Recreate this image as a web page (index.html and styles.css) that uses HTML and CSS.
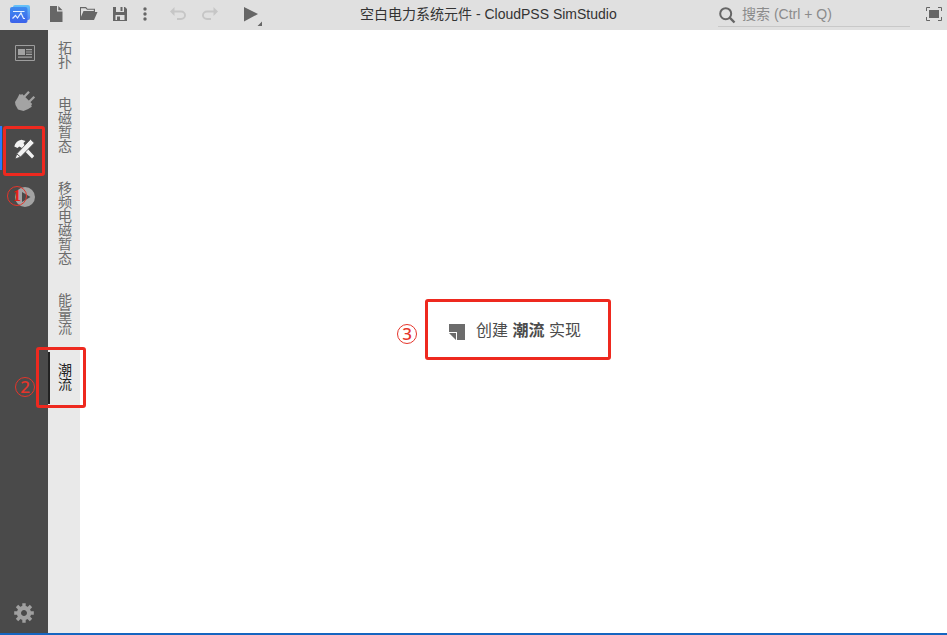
FILE: index.html
```html
<!DOCTYPE html>
<html lang="zh-CN">
<head>
<meta charset="utf-8">
<title>空白电力系统元件 - CloudPSS SimStudio</title>
<link rel="stylesheet" href="styles.css">
</head>
<body>
<div class="app">
  <header class="toolbar">
    <div class="tools">
      <svg class="logo" width="20" height="18" viewBox="0 0 20 18"><defs><linearGradient id="g" x1="0" y1="0" x2="0" y2="1"><stop offset="0" stop-color="#3f8cf0"/><stop offset="1" stop-color="#3c62ea"/></linearGradient><linearGradient id="h" x1="0" y1="0" x2="0" y2="1"><stop offset="0" stop-color="#65c3f8"/><stop offset="1" stop-color="#5484f4"/></linearGradient></defs><rect x="3" y="0" width="17" height="15" rx="2" fill="url(#h)"/><rect x="0" y="2" width="17.500" height="16" rx="2" fill="url(#g)"/><path d="M3 6.500h11.500M2.500 13.500l3-3 2 2.500 3.500-5 2.500 5.500h1.500" fill="none" stroke="#e4efff" stroke-width="1.200"/></svg>
      <svg class="new" width="13" height="16" viewBox="0 0 13 16"><path d="M0 0h7v5.500h5.500V16H0zM8.300 0l4.200 4.300H8.300z"/></svg>
      <svg class="open" width="18" height="14" viewBox="0 0 18 14"><path fill-rule="evenodd" d="M0 0h6l1.500 1.700H15V5h2.500L14 13H0zM1 1.200v8.500L3.500 4h10.300V2.800H7L5.500 1.200z"/></svg>
      <svg class="save" width="14" height="14" viewBox="0 0 14 14"><path fill-rule="evenodd" d="M0 0h12l2 2v12H0zM3 0v5h8V0zM2.500 8v5h9V8z"/><path d="M7.500 0h2v4h-2zM4 9.500h3V13H4z"/></svg>
      <svg class="more" width="4" height="14" viewBox="0 0 4 14"><circle cx="2" cy="2" r="1.700"/><circle cx="2" cy="7" r="1.700"/><circle cx="2" cy="12" r="1.700"/></svg>
      <svg class="undo" width="16" height="14" viewBox="0 0 16 14"><path d="M0 4.500L4.500 0v3.500H11a5 4.750 0 0 1 0 9.500H7v-2h4a3 2.700 0 0 0 0-5.500H4.500V9z"/></svg>
      <svg class="redo" width="16" height="14" viewBox="0 0 16 14"><path transform="translate(16) scale(-1 1)" d="M0 4.500L4.500 0v3.500H11a5 4.750 0 0 1 0 9.500H7v-2h4a3 2.700 0 0 0 0-5.500H4.500V9z"/></svg>
      <svg class="run" width="19" height="19" viewBox="0 0 19 19"><path d="M0 0l14 7-14 7.500zM18 14.500V19h-4.500z"/></svg>
    </div>
    <h1 class="title">空白电力系统元件 - CloudPSS SimStudio</h1>
    <div class="search">
      <svg width="17" height="17" viewBox="0 0 17 17"><circle cx="6.700" cy="6.700" r="5.500" fill="none" stroke="#666" stroke-width="2"/><path d="M10.700 10.700l4.800 4.800" stroke="#666" stroke-width="2.400"/></svg>
      <span>搜索 (Ctrl + Q)</span>
    </div>
    <svg class="full" width="16" height="14" viewBox="0 0 16 14"><path d="M3 3h10v8H3z"/><path d="M.5 4V.5H4M12 .5h3.500V4M15.500 10v3.500H12M4 13.500H.5V10" fill="none" stroke="#666"/></svg>
  </header>
  <div class="body">
    <nav class="rail">
      <div class="rail-item"><svg width="20" height="16" viewBox="0 0 20 16"><path d="M.5.500h19v15H.5z" fill="none" stroke="#9d9d9d"/><path d="M3 4h7v6H3zM11 4h6v1.200h-6zM11 6.400h6v1.200h-6zM11 8.800h6V10h-6zM3 11.500h14v1.200H3z"/></svg></div>
      <div class="rail-item"><svg width="20" height="20" viewBox="0 0 20 20"><path d="M4.500 3L6 3.800 7.200 3l10 10-1 1.200.6 1.500-3.600 2.300L8.500 20 3 18.500.5 14 0 11l2.500-4z"/><path d="M9 6L14 .8M14 11L19.300 5.700" stroke="#a3a3a3" stroke-width="2.300" fill="none"/></svg></div>
      <div class="rail-item active"><svg width="21" height="21" viewBox="0 0 21 21"><path d="M.3 7.500Q2 1.500 7.500.8L11.500 2 9.500 4l1.200 2.500 9.500 10.500L18 19.500 7.200 8.600 5.200 7.500 3.500 9z"/><path d="M16.500.3L20.300 4 6.500 18 1 20 3 14.500z" stroke="#4a4a4a" stroke-width=".8"/><path d="M3 15l3.500 3" stroke="#4a4a4a"/></svg></div>
      <div class="rail-item"><svg width="20" height="20" viewBox="0 0 20 20"><path fill-rule="evenodd" d="M10 0a10 10 0 1 0 0 20 10 10 0 0 0 0-20zM7 5l8.500 5L7 15z"/></svg></div>
      <div class="settings"><svg width="20" height="20" viewBox="-10 -10 20 20"><g stroke="#a0a0a0" stroke-width="3.400"><path d="M0-9.800V-5M0 5v4.800M-9.800 0H-5M5 0h4.800M-7-7l3 3M4 4l3 3M7-7L4-4M-4 4l-3 3"/></g><circle r="5.100" fill="none" stroke="#a0a0a0" stroke-width="4.200"/></svg></div>
    </nav>
    <nav class="tabs">
      <div class="tab">拓扑</div>
      <div class="tab">电磁暂态</div>
      <div class="tab">移频电磁暂态</div>
      <div class="tab">能量流</div>
      <div class="tab selected">潮流</div>
    </nav>
    <main class="canvas">
      <div class="create"><svg width="16" height="16" viewBox="0 0 16 16"><path d="M0 0h16v16H8V8H0zM0 9h7v7z"/></svg><span>创建 <b>潮流</b> 实现</span></div>
    </main>
  </div>
</div>
<div class="mark box-one"></div>
<div class="mark box-two"></div>
<div class="mark box-three"></div>
<div class="step step-one">1</div>
<div class="step step-two">2</div>
<div class="step step-three">3</div>
</body>
</html>
```
FILE: styles.css
```css
* { box-sizing: border-box; }
body { margin: 0; font-family: "Liberation Sans", "Noto Sans CJK SC", sans-serif; color: #333; }
svg { display: block; flex: none; overflow: visible; }
.app { height: 635px; display: flex; flex-direction: column; overflow: hidden; background: #fff; border-bottom: 2px solid #1565c0; }
.toolbar { height: 30px; flex: none; display: flex; background: #e0e0e0; fill: #666; }
.tools { width: 360px; display: flex; align-items: flex-start; }
.logo { margin: 5px 0 0 10px; }
.new { margin: 6px 0 0 20px; }
.open { margin: 7px 0 0 17px; }
.save { margin: 7px 0 0 15px; }
.more { margin: 7px 0 0 16px; }
.undo, .redo { fill: #c6c6c6; }
.undo { margin: 7px 0 0 23px; }
.redo { margin: 7px 0 0 16px; }
.run { margin: 7px 0 0 26px; }
.title { width: 358px; margin: 0; font-size: 14px; font-weight: 400; line-height: 28px; white-space: nowrap; }
.search { width: 192px; height: 27px; display: flex; gap: 6px; padding: 7px 0 0 1px; border-bottom: 1px solid #c8c8c8; color: #8b8b8b; font-size: 14px; line-height: 15px; }
.full { margin: 7px 0 0 16px; }
.body { flex: 1; display: flex; min-height: 0; }
.rail { width: 48px; display: flex; flex-direction: column; gap: 4px; background: #4a4a4a; fill: #a3a3a3; }
.rail-item { height: 44px; display: flex; align-items: center; justify-content: center; padding: 1px 0 0 2px; }
.rail-item.active { border-left: 2px solid #2979ff; padding: 2px 1px 0 0; fill: #f2f2f2; }
.settings { margin: auto 0 10px 14px; }
.tabs { width: 32px; padding-top: 11px; display: flex; flex-direction: column; gap: 28px; background: #e9e9e9; color: #6c6c6c; }
.tab { width: 32px; padding: 0 7px 0 10px; font-size: 14px; line-height: 14px; word-break: break-all; }
.tab.selected { margin-top: -11px; padding: 11px 7px 13px 8px; border-left: 2px solid #222; color: #222; }
.canvas { flex: 1; display: flex; align-items: center; justify-content: center; }
.create { display: flex; align-items: center; gap: 11px; padding-left: 3px; font-size: 16px; line-height: 24px; color: #4c4c4c; fill: #6c6c6c; }
.create span { margin-top: -2px; }
.create svg { margin-top: 1px; }
.mark { position: absolute; border: 3px solid #ee291f; border-radius: 3px; }
.box-one { left: 3px; top: 126px; width: 42px; height: 50px; }
.box-two { left: 36px; top: 347px; width: 50px; height: 61px; }
.box-three { left: 425px; top: 299px; width: 186px; height: 61px; }
.step { position: absolute; width: 20px; height: 20px; border: 1px solid #e5352b; border-radius: 50%; color: #e5352b; font: 500 17px/18px "Noto Sans", sans-serif; text-align: center; }
.step-one { left: 7px; top: 186px; font-family: "Liberation Serif", serif; font-weight: 700; color: #e5221a; }
.step-two { left: 15px; top: 377px; }
.step-three { left: 397px; top: 324px; }
```
